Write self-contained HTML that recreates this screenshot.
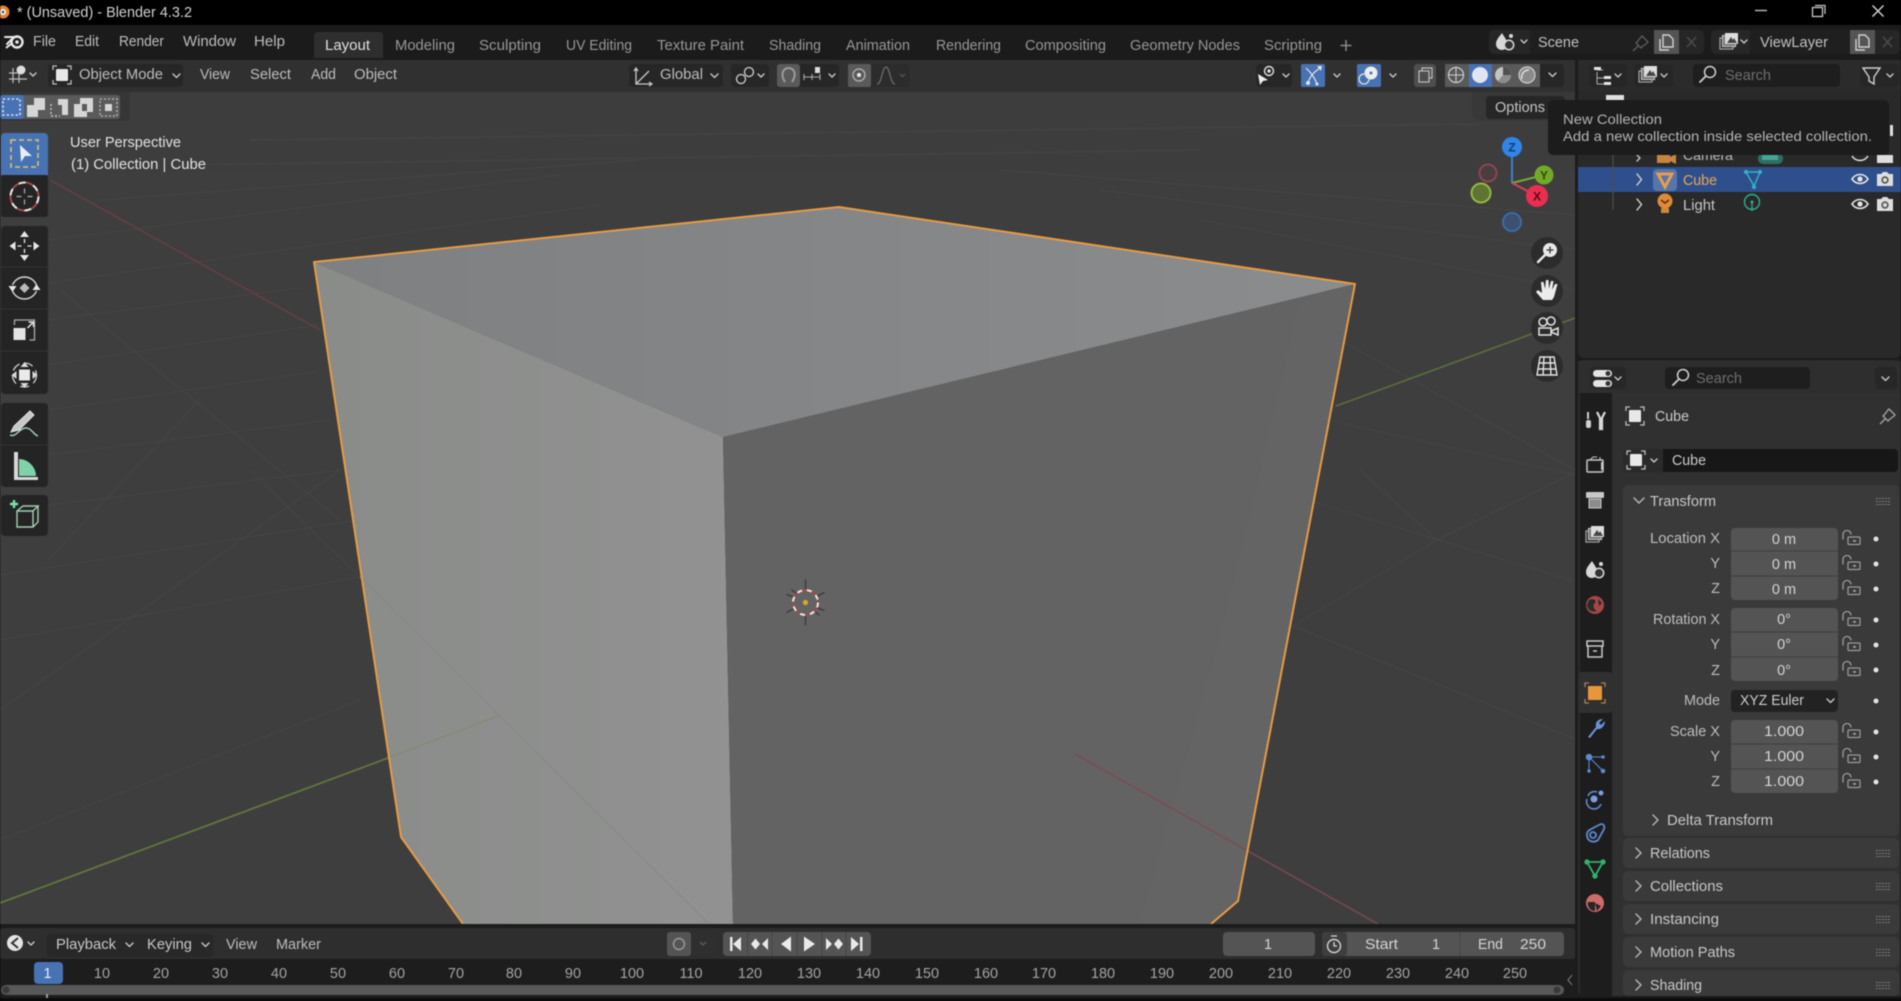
<!DOCTYPE html>
<html lang="en"><head><meta charset="utf-8"><title>Blender 4.3.2</title>
<style>
html,body{margin:0;padding:0;background:#000;width:1901px;height:1001px;overflow:hidden}
svg{display:block;filter:blur(.5px)}
text{font-family:"Liberation Sans",sans-serif;font-size:14.5px;fill:#bdbdbd}
.tab{fill:#979797;font-size:15px}
.mid{text-anchor:middle}
.end{text-anchor:end}
.sc{fill:#a4a4a4;font-size:14.5px}
.ch{fill:none;stroke:#c8c8c8;stroke-width:1.4;stroke-linecap:round;stroke-linejoin:round}
</style></head><body>
<svg width="1901" height="1001" viewBox="0 0 1901 1001" xmlns="http://www.w3.org/2000/svg">
<defs>
<linearGradient id="lf" x1="0" y1="0" x2="1" y2="0"><stop offset="0" stop-color="#8a8c8a"/><stop offset="1" stop-color="#919291"/></linearGradient>
<linearGradient id="tf" x1="0" y1="0" x2="1" y2="0"><stop offset="0" stop-color="#7f8081"/><stop offset="1" stop-color="#8b8c8d"/></linearGradient>
<g id="lock"><path d="M0 8V4a4 4 0 0 1 8-1" fill="none" stroke="#9c9c9c" stroke-width="1.300" stroke-linecap="round"/><rect x="5" y="6" width="12" height="7.500" rx="1" fill="none" stroke="#9c9c9c" stroke-width="1.200"/><rect x="10" y="9" width="3" height="1.800" fill="#9c9c9c"/></g>
<g id="grip" fill="none" stroke="#7f7f7f" stroke-width="1.100" stroke-dasharray="1.800 1.200"><path d="M0 .5H15M0 3.500H15M0 6.500H15"/></g>
<g id="eye"><path d="M-8 0C-4-6 4-6 8 0C4 6-4 6-8 0Z" fill="none" stroke="#e4e4e4" stroke-width="1.600"/><circle r="2.600" fill="#e4e4e4"/></g>
<g id="cam"><path d="M-8-5H-4L-2-7H2L4-5H8V7H-8Z" fill="#dedede"/><circle cy="1" r="3.700" fill="#555"/><circle cy="1" r="2" fill="#dedede"/></g>
<g id="objbox"><path d="M-9-5V-9H-5M5-9H9V-5M9 5V9H5M-5 9H-9V5" fill="none" stroke="#bdbdbd" stroke-width="1.300"/><rect x="-6" y="-6" width="12" height="12" rx="1" fill="#e8e8e8"/></g>
<g id="layers"><rect x="-9" y="-4" width="13" height="11" fill="none" stroke="#a8a8a8" stroke-width="1.200"/><rect x="-6.500" y="-6.500" width="13" height="11" fill="#777" stroke="#bbb" stroke-width="1.200"/><rect x="-4" y="-9" width="13" height="11" fill="#ddd"/><path d="M-2 1L2-5L4-2L5-4L8 1Z" fill="#444"/></g>
<g id="copy"><path d="M-6-3V8H3" fill="none" stroke="#d0d0d0" stroke-width="1.400"/><path d="M-3-7H3L7-3V5H-3Z" fill="none" stroke="#d0d0d0" stroke-width="1.400"/></g>
<g id="sceneic"><path d="M-4-9C-1-4 1-2 1 2C1 6-1 8-4 8C-8 8-10 5-10 2C-10-2-7-5-4-9Z" fill="#d8d8d8"/><circle cx="3" cy="3" r="4.700" fill="#333" stroke="#d8d8d8" stroke-width="1.500"/><circle cx="5" cy="-6" r="2" fill="#d8d8d8"/></g>
<g id="mag"><circle cx="3" cy="-3" r="5.500" fill="none" stroke="#cfcfcf" stroke-width="1.500"/><path d="M-1 1L-7 7" stroke="#cfcfcf" stroke-width="1.800" stroke-linecap="round"/></g>
<g id="pin"><path d="M-8 8L-3 3M-5 0L0 5L2 3L6 0L7-1L1-7L0-6L-3-2Z" fill="none" stroke="currentColor" stroke-width="1.300" stroke-linejoin="round"/></g>
</defs>

<!-- base -->
<rect width="1901" height="1001" fill="#1c1c1c"/>
<!-- title bar -->
<rect width="1901" height="25" fill="#000"/>
<circle cx="3" cy="12" r="6.500" fill="#e8822a"/><circle cx="3" cy="12" r="3" fill="#fff"/><circle cx="3" cy="12" r="1.500" fill="#3a6ea5"/>
<text x="17" y="17" textLength="175" lengthAdjust="spacingAndGlyphs" style="fill:#d0d0d0;font-size:15px">* (Unsaved) - Blender 4.3.2</text>
<path d="M1755 10.500H1767" stroke="#bdbdbd" stroke-width="1.400"/>
<rect x="1812.500" y="7.500" width="10" height="9" fill="none" stroke="#c8c8c8" stroke-width="1.300"/><path d="M1815 5.500H1825V14" fill="none" stroke="#c8c8c8" stroke-width="1.200"/>
<path d="M1872.500 5.500L1883.500 16.500M1883.500 5.500L1872.500 16.500" stroke="#d0d0d0" stroke-width="1.500"/>

<!-- top menu bar -->
<rect y="25" width="1901" height="35" fill="#1b1b1b"/>
<g transform="translate(14,41)"><circle cx="3" cy="1" r="5.500" fill="none" stroke="#e8e8e8" stroke-width="2.400"/><circle cx="3" cy="1" r="1.800" fill="#e8e8e8"/><path d="M-7 3L-1-3M-9-4H2" stroke="#e8e8e8" stroke-width="2" fill="none" stroke-linecap="round"/><path d="M-8 7L-3 3" stroke="#e8e8e8" stroke-width="2"/></g>
<text x="33" y="46" textLength="23" lengthAdjust="spacingAndGlyphs">File</text>
<text x="75" y="46" textLength="24" lengthAdjust="spacingAndGlyphs">Edit</text>
<text x="119" y="46" textLength="45" lengthAdjust="spacingAndGlyphs">Render</text>
<text x="183" y="46" textLength="53" lengthAdjust="spacingAndGlyphs">Window</text>
<text x="254" y="46" textLength="31" lengthAdjust="spacingAndGlyphs">Help</text>
<path d="M314 58V36a4 4 0 0 1 4-4H379a4 4 0 0 1 4 4V58Z" fill="#2e2e2e"/>
<text x="325" y="50" textLength="45" lengthAdjust="spacingAndGlyphs" style="fill:#e0e0e0;font-size:15px">Layout</text>
<text class="tab" x="395" y="50" textLength="60" lengthAdjust="spacingAndGlyphs">Modeling</text>
<text class="tab" x="479" y="50" textLength="62" lengthAdjust="spacingAndGlyphs">Sculpting</text>
<text class="tab" x="566" y="50" textLength="66" lengthAdjust="spacingAndGlyphs">UV Editing</text>
<text class="tab" x="657" y="50" textLength="87" lengthAdjust="spacingAndGlyphs">Texture Paint</text>
<text class="tab" x="769" y="50" textLength="52" lengthAdjust="spacingAndGlyphs">Shading</text>
<text class="tab" x="846" y="50" textLength="64" lengthAdjust="spacingAndGlyphs">Animation</text>
<text class="tab" x="936" y="50" textLength="65" lengthAdjust="spacingAndGlyphs">Rendering</text>
<text class="tab" x="1025" y="50" textLength="81" lengthAdjust="spacingAndGlyphs">Compositing</text>
<text class="tab" x="1130" y="50" textLength="110" lengthAdjust="spacingAndGlyphs">Geometry Nodes</text>
<text class="tab" x="1264" y="50" textLength="58" lengthAdjust="spacingAndGlyphs">Scripting</text>
<path d="M1346 40V51M1340.500 45.500H1351.500" stroke="#8a8a8a" stroke-width="1.500"/>

<!-- scene & viewlayer -->
<rect x="1489" y="30" width="215" height="24" rx="5" fill="#262626"/>
<rect x="1530" y="30" width="124" height="24" fill="#1f1f1f"/>
<use href="#sceneic" x="1506" y="42"/>
<path d="M1521 40l3 3 3-3" class="ch"/>
<text x="1538" y="47" textLength="41" lengthAdjust="spacingAndGlyphs" style="fill:#c2c2c2;font-size:15px">Scene</text>
<use href="#pin" x="1641" y="43" color="#5e5e5e"/>
<rect x="1654" y="30" width="25" height="24" fill="#545454"/><use href="#copy" x="1666" y="42"/>
<path d="M1687 37L1696 47M1696 37L1687 47" stroke="#4b4b4b" stroke-width="1.500"/>
<rect x="1711" y="30" width="189" height="24" rx="5" fill="#262626"/>
<rect x="1750" y="30" width="100" height="24" fill="#1f1f1f"/>
<use href="#layers" x="1729" y="42"/>
<path d="M1741 40l3 3 3-3" class="ch"/>
<text x="1760" y="47" textLength="68" lengthAdjust="spacingAndGlyphs" style="fill:#c2c2c2;font-size:15px">ViewLayer</text>
<rect x="1850" y="30" width="25" height="24" fill="#545454"/><use href="#copy" x="1862" y="42"/>
<path d="M1883 37L1892 47M1892 37L1883 47" stroke="#4b4b4b" stroke-width="1.500"/>

<!-- viewport -->
<rect x="0" y="60" width="1575" height="864" fill="#3e3e3e"/>
<rect x="0" y="92" width="1575" height="80" fill="#3d3d3d"/>
<g stroke="#464646" stroke-width="1" fill="none">
<path d="M48 240L560 175M48 283L600 205M48 320L300 288M48 365L318 325M48 410L315 372M48 455L330 420M48 505L340 470M0 575L360 520"/>
<path d="M250 140L1480 124M180 165L1200 150M100 200L640 160M1000 170L1575 215M1100 190L1575 250M1200 220L1575 290"/>
<path d="M60 290L340 520M48 560L200 400M0 640L360 577M250 470L360 577M0 710L340 470M0 840L360 700"/>
<path d="M1293 626L1580 741M1293 626L1437 540L1580 470M1336 422L1580 476M1314 502L1580 583M1340 340L1575 470M1437 540L1360 470"/>
</g>
<path d="M50 180L320 330" stroke="#6b3d42" stroke-width="1.500"/>
<path d="M0 903L388 758" stroke="#62763c" stroke-width="1.800"/>
<path d="M1336 406L1575 318" stroke="#5a6d3c" stroke-width="1.700"/>

<!-- cube -->
<path d="M314 262L723 437L733 924H464L401 837Z" fill="url(#lf)"/>
<path d="M723 437L1355 284L1238 901L1211 924H733Z" fill="#636363"/>
<path d="M314 262L839 207L1355 284L723 437Z" fill="url(#tf)"/>
<path d="M1300 300L1355 284L1238 901L1211 924H1140L1230 600Z" fill="#666" opacity=".4"/>
<path d="M388 758L498 716" stroke="#7f8c70" stroke-width="1.300"/>
<path d="M360 577L708 923" stroke="#858786" stroke-width="1"/>
<path d="M1075 754L1378 924" stroke="#7d4a50" stroke-width="1.400"/>
<path d="M463 924L401 837L314 262L839 207L1355 284L1238 901L1211 924" fill="none" stroke="#e69b44" stroke-width="2" stroke-linejoin="round"/>
<!-- origin -->
<g transform="translate(805.500,602.500)">
<path d="M0-23V-12M0 12V23M-19-8L-11-5M11 5L19 8M-19 10L-11 6M11-6L19-10M-14-13L-8-8M8 8L14 13" stroke="#3a3a3a" stroke-width="1.300"/>
<circle r="12.500" fill="none" stroke="#a84848" stroke-width="2"/>
<circle r="12.500" fill="none" stroke="#e8e8e8" stroke-width="2" stroke-dasharray="5 5"/>
<circle r="2.600" fill="#e0a030"/>
</g>

<!-- header -->
<rect x="0" y="60" width="1575" height="32" fill="#303030"/>
<g transform="translate(19,74)"><path d="M-10 5H8M-10-1H2M-6-6V9M0-3V9" stroke="#bfbfbf" stroke-width="1.200" fill="none"/><circle cx="2" cy="-4" r="4.500" fill="#dcdcdc"/></g>
<path d="M30 73l3 3 3-3" class="ch"/>
<rect x="48" y="64" width="135" height="23" rx="4" fill="#262626"/>
<use href="#objbox" x="62" y="75"/>
<text x="79" y="79" textLength="84" lengthAdjust="spacingAndGlyphs">Object Mode</text>
<path d="M173 74l3.500 3.500 3.500-3.500" class="ch"/>
<text x="200" y="79" textLength="30" lengthAdjust="spacingAndGlyphs">View</text>
<text x="250" y="79" textLength="41" lengthAdjust="spacingAndGlyphs">Select</text>
<text x="311" y="79" textLength="25" lengthAdjust="spacingAndGlyphs">Add</text>
<text x="354" y="79" textLength="43" lengthAdjust="spacingAndGlyphs">Object</text>

<rect x="629" y="64" width="94" height="23" rx="4" fill="#262626"/>
<path d="M636 68V84H652M636 84L649 71M634 71L636 68L638 71M649 82L652 84L649 86" fill="none" stroke="#c8c8c8" stroke-width="1.300"/>
<text x="660" y="79" textLength="43" lengthAdjust="spacingAndGlyphs">Global</text>
<path d="M711 74l3.500 3.500 3.500-3.500" class="ch"/>
<rect x="731" y="64" width="38" height="23" rx="4" fill="#262626"/>
<circle cx="741" cy="79" r="4.500" fill="none" stroke="#d0d0d0" stroke-width="1.300"/><circle cx="749" cy="72" r="4.500" fill="none" stroke="#d0d0d0" stroke-width="1.300"/>
<path d="M758 74l3 3 3-3" class="ch"/>
<rect x="777" y="64" width="62" height="23" rx="4" fill="#262626"/>
<rect x="777" y="64" width="23" height="23" rx="3" fill="#5a5a5a"/>
<path d="M785 82C780 74 783 68 789 68C796 69 796 76 792 82" fill="none" stroke="#9c9c9c" stroke-width="2"/>
<path d="M804 77H820M804 74V80M812 74V80M820 74V80" stroke="#aaa" stroke-width="1.100" fill="none"/><rect x="815" y="67" width="5" height="6" fill="#ddd"/>
<path d="M829 74l3 3 3-3" class="ch"/>
<rect x="848" y="64" width="62" height="23" rx="4" fill="#2c2c2c"/>
<rect x="848" y="64" width="23" height="23" rx="2" fill="#5a5a5a"/>
<circle cx="859" cy="75" r="6" fill="none" stroke="#aaa" stroke-width="1.400"/><circle cx="859" cy="75" r="2" fill="#eee"/>
<path d="M877 84C882 84 882 67 886 67C890 67 890 84 895 84" fill="none" stroke="#6a6a6a" stroke-width="1.300"/>
<path d="M900 74l2.500 2.500 2.500-2.500" fill="none" stroke="#5a5a5a" stroke-width="1.200"/>

<rect x="1256" y="64" width="36" height="23" rx="4" fill="#262626"/>
<circle cx="1269" cy="71" r="4.500" fill="none" stroke="#e0e0e0" stroke-width="1.400"/><circle cx="1269" cy="71" r="1.700" fill="#e0e0e0"/>
<path d="M1258 74L1268 80L1263 81L1260 85Z" fill="#eee"/>
<path d="M1283 74l3 3 3-3" class="ch"/>
<rect x="1301" y="64" width="24" height="23" rx="2" fill="#4772b3"/>
<path d="M1306 68C1310 72 1314 76 1317 84M1320 68C1314 72 1310 76 1308 83" fill="none" stroke="#e4e4e4" stroke-width="1.200"/><circle cx="1308" cy="83" r="2" fill="#e4e4e4"/><circle cx="1317" cy="84" r="1.500" fill="#e4e4e4"/><path d="M1317 66L1322 66L1321 71Z" fill="#e4e4e4"/>
<path d="M1334 74l3 3 3-3" class="ch"/>
<rect x="1357" y="64" width="24" height="23" rx="2" fill="#4772b3"/>
<circle cx="1371" cy="73" r="6.500" fill="#eee"/><circle cx="1364" cy="79" r="5" fill="none" stroke="#e0e0e0" stroke-width="1.300"/><circle cx="1371" cy="73" r="1.500" fill="#4772b3"/>
<path d="M1390 74l3 3 3-3" class="ch"/>
<!-- xray + shading -->
<rect x="1414" y="64" width="22" height="23" rx="3" fill="#4e4e4e"/>
<rect x="1419" y="71" width="10" height="11" fill="none" stroke="#bdbdbd" stroke-width="1.200"/><path d="M1422 71V68H1432V78H1429" fill="none" stroke="#bdbdbd" stroke-width="1.200"/>
<rect x="1445" y="64" width="119" height="23" rx="4" fill="#262626"/>
<rect x="1445" y="64" width="24" height="23" fill="#5a5a5a"/>
<rect x="1469" y="64" width="23" height="23" fill="#4772b3"/>
<rect x="1492" y="64" width="48" height="23" fill="#5a5a5a"/>
<circle cx="1456" cy="75" r="7.500" fill="none" stroke="#cfcfcf" stroke-width="1.200"/><path d="M1448.500 75H1463.500M1456 67.500V82.500" stroke="#cfcfcf" stroke-width="1"/>
<circle cx="1480" cy="75" r="8" fill="#dfe5f2"/>
<circle cx="1503" cy="75" r="8" fill="#c4c4c4"/><path d="M1503 75V67A8 8 0 0 1 1511 75Z" fill="#505050"/><path d="M1503 75L1511 75A8 8 0 0 1 1498 81Z" fill="#8c8c8c"/>
<circle cx="1527" cy="75" r="8" fill="#8a8a8a" stroke="#d0d0d0" stroke-width="1.200"/><path d="M1522 79A7 7 0 0 1 1529 70" stroke="#e0e0e0" stroke-width="1.400" fill="none"/>
<path d="M1549 73l3.500 3.500 3.500-3.500" class="ch"/>

<!-- select mode row -->
<path d="M0 92H130V117a4 4 0 0 1-4 4H0Z" fill="#363636"/>
<rect x="0" y="95" width="120" height="24" rx="3" fill="#5a5a5a"/>
<rect x="0" y="95" width="24" height="24" rx="3" fill="#4772b3"/>
<rect x="3" y="99" width="17" height="16" fill="none" stroke="#e0e8f4" stroke-width="1.600" stroke-dasharray="2.200 2.200"/>
<path d="M34 98H45V110H38V117H27V105H34Z" fill="#d6d6d6"/>
<path d="M58 99H68V115H62V105H58Z" fill="#d6d6d6"/><path d="M51 104V116H60" fill="none" stroke="#c8c8c8" stroke-width="1.400" stroke-dasharray="2 2"/>
<path d="M80 98H93V112H87V117H74V104H80ZM82 104V111H87V104Z" fill="#d6d6d6" fill-rule="evenodd"/>
<rect x="105" y="104" width="7" height="7" fill="#d6d6d6"/><rect x="100" y="99" width="17" height="17" fill="none" stroke="#bdbdbd" stroke-width="1.300" stroke-dasharray="2 2"/>

<!-- viewport text -->
<text x="70" y="147" textLength="111" lengthAdjust="spacingAndGlyphs" style="fill:#e2e2e2;font-size:14.500px">User Perspective</text>
<text x="71" y="169" textLength="135" lengthAdjust="spacingAndGlyphs" style="fill:#e2e2e2;font-size:14.500px">(1) Collection | Cube</text>

<!-- toolbar -->
<rect x="1" y="175" width="47" height="42" rx="3" fill="#242424"/>
<path d="M1 175V137a4 4 0 0 1 4-4H44a4 4 0 0 1 4 4V175Z" fill="#4772b3"/>
<rect x="1" y="226" width="47" height="168" rx="4" fill="#242424"/>
<rect x="1" y="403" width="47" height="84" rx="4" fill="#242424"/>
<rect x="1" y="495" width="47" height="41" rx="4" fill="#242424"/>
<path d="M1 267H48M1 309H48M1 351H48M1 445H48" stroke="#343434"/>
<rect x="11" y="140" width="27" height="27" fill="none" stroke="#c8ba7c" stroke-width="1.800" stroke-dasharray="5 3"/>
<path d="M20 145L32 156L25 156L21 162Z" fill="#e8eef8"/>
<g transform="translate(24.500,196.500)"><circle r="14" fill="none" stroke="#a04a50" stroke-width="2"/><circle r="14" fill="none" stroke="#e8e8e8" stroke-width="2" stroke-dasharray="7 8"/><path d="M-8 0H-3M3 0H8M0-8V-3M0 3V8" stroke="#aaa" stroke-width="1.200"/></g>
<g transform="translate(24.500,246)" fill="#e6e6e6"><path d="M0-15L-4.500-9H4.500ZM0 15L-4.500 9H4.500ZM-15 0L-9-4.500V4.500ZM15 0L9-4.500V4.500Z"/><path d="M-7 0H-3M3 0H7M0-7V-3M0 3V7" stroke="#e6e6e6" stroke-width="1.300"/></g>
<g transform="translate(24.500,288)"><path d="M-12-3A13 13 0 0 1 12-3M-12 3A13 13 0 0 0 12 3" fill="none" stroke="#d8d8d8" stroke-width="1.400"/><path d="M0-5L5 0L0 5L-5 0Z" fill="#bbb"/><path d="M-12 4L-16-2H-8ZM12-4L16 2H8Z" fill="#e6e6e6"/></g>
<g transform="translate(24.500,331)"><rect x="-11" y="-3" width="12" height="12" fill="#e4e4e4"/><path d="M-10-6V-11H10V9H5" fill="none" stroke="#aaa" stroke-width="1.300"/><path d="M3-3L8-8M4-9H9V-4" fill="none" stroke="#e0e0e0" stroke-width="1.500"/></g>
<g transform="translate(24.500,375)"><rect x="-5.500" y="-5.500" width="11" height="11" fill="#eaeaea"/><circle r="12" fill="none" stroke="#d0d0d0" stroke-width="1.300" stroke-dasharray="9 5"/><path d="M0-13L-4-8H4ZM0 13L-4 8H4ZM-13 0L-8-4V4ZM13 0L8-4V4Z" fill="#d8d8d8"/></g>
<g transform="translate(24,424)"><path d="M-13 8L-10 2L6-13L10-9L-5 6Z" fill="#c8c8c8" stroke="#e0e0e0" stroke-width="1"/><path d="M-14 11C-8 14-4 3 3 4C8 5 10 11 14 12" fill="none" stroke="#a8d4bb" stroke-width="1.400"/></g>
<g transform="translate(24,467)"><path d="M-10-15H-6V10H14V13H-10Z" fill="#d8d8d8"/><path d="M-5-8C4-8 12 0 12 9H-5Z" fill="#7fd3a9"/></g>
<g transform="translate(25,517)"><path d="M-8-6H8V10H-8ZM-8-6L-2-11H13L8-6M13-11V5L8 10" fill="none" stroke="#a2cfb4" stroke-width="1.400"/><path d="M-11-17V-9M-15-13H-7" stroke="#7fe0ab" stroke-width="2.400"/></g>

<!-- options -->
<path d="M1472 92H1575V121H1480a8 8 0 0 1-8-8Z" fill="#383838"/>
<rect x="1486" y="96" width="79" height="23" rx="4" fill="#262626"/>
<text x="1495" y="112" textLength="50" lengthAdjust="spacingAndGlyphs" style="fill:#c4c4c4">Options</text>

<!-- gizmo -->
<path d="M1512 183V148" stroke="#3d7fcf" stroke-width="2"/>
<path d="M1512 183L1544 175" stroke="#7da838" stroke-width="2"/>
<path d="M1512 183L1537 196" stroke="#d84050" stroke-width="2"/>
<circle cx="1488" cy="173" r="8.500" fill="#4a3c3f" stroke="#8f4551" stroke-width="2"/>
<circle cx="1481" cy="193" r="9.500" fill="#5e7433" stroke="#93bb3c" stroke-width="2"/>
<circle cx="1512" cy="222" r="9" fill="#3c5070" stroke="#3e6aa3" stroke-width="2"/>
<circle cx="1512" cy="147" r="10" fill="#2f86e8"/>
<circle cx="1544" cy="175" r="9.500" fill="#73a92a"/>
<circle cx="1537" cy="196" r="11" fill="#ea2e50"/>
<text class="mid" x="1512" y="151.500" style="fill:#123c70;font-weight:bold;font-size:12px">Z</text>
<text class="mid" x="1544" y="179.500" style="fill:#2e4a08;font-weight:bold;font-size:12px">Y</text>
<text class="mid" x="1537" y="200.500" style="fill:#5a0818;font-weight:bold;font-size:12px">X</text>
<!-- nav -->
<circle cx="1547" cy="253" r="16" fill="#2c2c2c"/><circle cx="1547" cy="291" r="16" fill="#2c2c2c"/><circle cx="1547" cy="328" r="16" fill="#2c2c2c"/><circle cx="1547" cy="366" r="16" fill="#2c2c2c"/>
<g transform="translate(1547,253)"><circle cx="3" cy="-3" r="7" fill="#e8e8e8"/><path d="M-2 2L-9 9" stroke="#e8e8e8" stroke-width="2.500" stroke-linecap="round"/><path d="M3-6.500V.5M-.5-3H6.500" stroke="#333" stroke-width="1.300"/></g>
<g transform="translate(1547,291)"><path d="M-4 9L-11 1L-9-1L-5 2L-6-9L-3.500-9L-2-2L-1-11H1.500L2-2L4-10H6.500L5-1L8-7H10.500L7 6L5 9Z" fill="#ececec"/></g>
<g transform="translate(1547,328)" fill="none" stroke="#e4e4e4" stroke-width="1.500"><circle cx="-4" cy="-6" r="4"/><circle cx="4" cy="-7" r="4"/><rect x="-8" y="0" width="12" height="7"/><path d="M4 3L11 0V7L4 4" /></g>
<g transform="translate(1547,366)" fill="none" stroke="#e4e4e4" stroke-width="1.400"><path d="M-7-9H7L10 9H-10ZM-8.500-3H8.500M-9.500 3H9.500M-3-9L-4 9M3-9L4 9"/></g>

<!-- right panel divider -->
<rect x="1575" y="60" width="326" height="941" fill="#1c1c1c"/>
<!-- outliner -->
<rect x="1578" y="60" width="323" height="298" rx="6" fill="#292929"/>
<rect x="1578" y="60" width="323" height="30" fill="#2b2b2b"/>
<rect x="1589" y="64" width="38" height="23" rx="4" fill="#262626"/>
<path d="M1597 70H1603M1597 72V84M1597 78H1607M1597 84H1607" fill="none" stroke="#b0b0b0"/><rect x="1594" y="67" width="7" height="3" fill="#e4e4e4"/><rect x="1604" y="76" width="7" height="3" fill="#e4e4e4"/><rect x="1604" y="82" width="7" height="3" fill="#e4e4e4"/>
<path d="M1615 74l3 3 3-3" class="ch"/>
<rect x="1634" y="64" width="39" height="23" rx="4" fill="#262626"/>
<use href="#layers" x="1648" y="75"/>
<path d="M1661 74l3 3 3-3" class="ch"/>
<rect x="1693" y="64" width="147" height="23" rx="4" fill="#1e1e1e"/>
<use href="#mag" x="1707" y="75"/>
<text x="1725" y="80" textLength="46" lengthAdjust="spacingAndGlyphs" style="fill:#6e6e6e;font-size:15px">Search</text>
<rect x="1860" y="64" width="39" height="23" rx="4" fill="#262626"/>
<path d="M1863 68H1880L1874 77V84L1869 81V77Z" fill="none" stroke="#cfcfcf" stroke-width="1.400"/>
<path d="M1887 74l3 3 3-3" class="ch"/>
<rect x="1606" y="95" width="18" height="5" fill="#e0e0e0"/>
<rect x="1890" y="125" width="3" height="11" fill="#e0e0e0"/>

<rect x="1578" y="167" width="323" height="25" fill="#2f4f8c"/>
<path d="M1613 155V210" stroke="#4d4d4d" stroke-width="1.200"/>
<path d="M1637 155l3 3-3 3" class="ch"/><path d="M1637 174l4.500 5.500-4.500 5.500" class="ch"/><path d="M1637 199l4.500 5.500-4.500 5.500" class="ch"/>
<rect x="1657" y="154" width="13" height="9" fill="#c9853f"/><path d="M1670 157L1676 154V164L1670 161Z" fill="#c9853f"/>
<text x="1683" y="160" textLength="50" lengthAdjust="spacingAndGlyphs" style="font-size:14px">Camera</text>
<rect x="1758" y="153" width="25" height="11" rx="5" fill="#2c6f64"/><rect x="1762" y="155" width="16" height="5" fill="#47a595"/>
<path d="M1852 156C1856 162 1864 162 1868 156" fill="none" stroke="#e4e4e4" stroke-width="1.500"/>
<rect x="1877" y="155" width="16" height="8" fill="#dedede"/>
<rect x="1653" y="169" width="24" height="22" rx="4" fill="#5676ab"/>
<path d="M1658 174H1672L1665 187Z" fill="none" stroke="#e89c4c" stroke-width="3"/>
<text x="1683" y="185" textLength="34" lengthAdjust="spacingAndGlyphs" style="fill:#e8a654;font-size:15px">Cube</text>
<path d="M1746 172H1760L1754 186Z" fill="none" stroke="#2fb6c8" stroke-width="1.400"/><circle cx="1746" cy="172" r="2" fill="#2fb6c8"/><circle cx="1760" cy="172" r="2" fill="#2fb6c8"/><circle cx="1754" cy="187" r="2" fill="#2fb6c8"/>
<use href="#eye" x="1860" y="179"/><use href="#cam" x="1885" y="179"/>
<circle cx="1665" cy="201" r="7.500" fill="#e08a38"/><rect x="1661" y="208" width="8" height="5" fill="#c9893e"/><path d="M1661 200L1665 203L1669 200" stroke="#5a3010" stroke-width="1.500" fill="none"/>
<text x="1683" y="210" textLength="32" lengthAdjust="spacingAndGlyphs" style="fill:#c8c8c8;font-size:15px">Light</text>
<circle cx="1752" cy="202" r="7.500" fill="none" stroke="#2eb08f" stroke-width="1.400"/><circle cx="1752" cy="202" r="1.500" fill="#2eb08f"/><path d="M1752 203V211" stroke="#2eb08f" stroke-width="1.300"/>
<use href="#eye" x="1860" y="204"/><use href="#cam" x="1885" y="204"/>

<!-- tooltip -->
<rect x="1548" y="100" width="341" height="55" rx="5" fill="#1c1c1c"/>
<text x="1563" y="124" textLength="99" lengthAdjust="spacingAndGlyphs" style="fill:#b4b4b4;font-size:14px">New Collection</text>
<text x="1563" y="141" textLength="309" lengthAdjust="spacingAndGlyphs" style="fill:#b4b4b4;font-size:14px">Add a new collection inside selected collection.</text>

<!-- properties -->
<rect x="1578" y="360" width="323" height="636" rx="5" fill="#2c2c2c"/>
<rect x="1578" y="361" width="323" height="32" fill="#2e2e2e"/>
<rect x="1580" y="393" width="32" height="603" fill="#1d1d1d"/>
<rect x="1612" y="393" width="289" height="603" fill="#303030"/>
<rect x="1578" y="672" width="34" height="41" rx="3" fill="#303030"/>
<!-- header -->
<rect x="1590" y="367" width="36" height="22" rx="4" fill="#272727"/>
<rect x="1593" y="370" width="19" height="7" rx="3.500" fill="#e4e4e4"/><circle cx="1608" cy="373.500" r="2.500" fill="#333"/><rect x="1593" y="380" width="19" height="7" rx="3.500" fill="#e4e4e4"/><circle cx="1608" cy="383.500" r="2.500" fill="#333"/>
<path d="M1615 377l3 3 3-3" class="ch"/>
<rect x="1665" y="367" width="145" height="22" rx="4" fill="#1e1e1e"/>
<use href="#mag" x="1680" y="378"/>
<text x="1696" y="383" textLength="46" lengthAdjust="spacingAndGlyphs" style="fill:#6e6e6e;font-size:15px">Search</text>
<rect x="1875" y="367" width="22" height="22" rx="4" fill="#272727"/>
<path d="M1882 377l3.500 3.500 3.500-3.500" class="ch"/>
<!-- context -->
<use href="#objbox" x="1635" y="416"/>
<text x="1655" y="421" textLength="34" lengthAdjust="spacingAndGlyphs" style="fill:#cbcbcb;font-size:15px">Cube</text>
<use href="#pin" x="1888" y="416" color="#a5a5a5"/>
<rect x="1623" y="449" width="275" height="23" rx="4" fill="#2a2a2a"/>
<path d="M1663 449H1894a4 4 0 0 1 4 4V468a4 4 0 0 1-4 4H1663Z" fill="#171717"/>
<use href="#objbox" x="1636" y="460"/>
<path d="M1651 459l3 3 3-3" class="ch"/>
<text x="1672" y="465" textLength="34" lengthAdjust="spacingAndGlyphs" style="fill:#cbcbcb;font-size:15px">Cube</text>
<!-- transform panel -->
<rect x="1623" y="485" width="276" height="351" rx="5" fill="#3a3a3a"/>
<path d="M1634 498l5 5 5-5" class="ch" style="stroke:#b8b8b8"/>
<text x="1650" y="506" textLength="66" lengthAdjust="spacingAndGlyphs" style="fill:#c8c8c8;font-size:15px">Transform</text>
<use href="#grip" x="1876" y="498"/>
<!-- fields -->
<rect x="1731" y="528" width="107" height="72" rx="4" fill="#545454"/>
<rect x="1731" y="608" width="107" height="73" rx="4" fill="#545454"/>
<rect x="1731" y="720" width="107" height="73" rx="4" fill="#545454"/>
<path d="M1731 551H1838M1731 576H1838M1731 632H1838M1731 657H1838M1731 744H1838M1731 769H1838" stroke="#3f3f3f" stroke-width="1"/>
<rect x="1731" y="690" width="107" height="22" rx="4" fill="#222"/>
<text class="end" x="1720" y="543" textLength="70" lengthAdjust="spacingAndGlyphs">Location X</text>
<text class="end" x="1720" y="568">Y</text>
<text class="end" x="1720" y="593">Z</text>
<text class="end" x="1720" y="624" textLength="67" lengthAdjust="spacingAndGlyphs">Rotation X</text>
<text class="end" x="1720" y="649">Y</text>
<text class="end" x="1720" y="675">Z</text>
<text class="end" x="1720" y="705" textLength="36" lengthAdjust="spacingAndGlyphs">Mode</text>
<text class="end" x="1720" y="736" textLength="50" lengthAdjust="spacingAndGlyphs">Scale X</text>
<text class="end" x="1720" y="761">Y</text>
<text class="end" x="1720" y="786">Z</text>
<text class="mid" x="1784" y="544" style="fill:#d4d4d4">0 m</text><text class="mid" x="1784" y="569" style="fill:#d4d4d4">0 m</text><text class="mid" x="1784" y="594" style="fill:#d4d4d4">0 m</text>
<text class="mid" x="1784" y="624" style="fill:#d4d4d4">0°</text><text class="mid" x="1784" y="649" style="fill:#d4d4d4">0°</text><text class="mid" x="1784" y="675" style="fill:#d4d4d4">0°</text>
<text class="mid" x="1784" y="736" textLength="40" lengthAdjust="spacingAndGlyphs" style="fill:#d4d4d4">1.000</text><text class="mid" x="1784" y="761" textLength="40" lengthAdjust="spacingAndGlyphs" style="fill:#d4d4d4">1.000</text><text class="mid" x="1784" y="786" textLength="40" lengthAdjust="spacingAndGlyphs" style="fill:#d4d4d4">1.000</text>
<text x="1740" y="705" textLength="64" lengthAdjust="spacingAndGlyphs" style="fill:#cccccc">XYZ Euler</text>
<path d="M1827 699l3.500 3.500 3.500-3.500" class="ch"/>
<use href="#lock" x="1843" y="531"/><use href="#lock" x="1843" y="556"/><use href="#lock" x="1843" y="581"/>
<use href="#lock" x="1843" y="612"/><use href="#lock" x="1843" y="637"/><use href="#lock" x="1843" y="662"/>
<use href="#lock" x="1843" y="724"/><use href="#lock" x="1843" y="749"/><use href="#lock" x="1843" y="774"/>
<g fill="#e4e4e4"><circle cx="1876" cy="539" r="2.500"/><circle cx="1876" cy="564" r="2.500"/><circle cx="1876" cy="589" r="2.500"/><circle cx="1876" cy="620" r="2.500"/><circle cx="1876" cy="645" r="2.500"/><circle cx="1876" cy="670" r="2.500"/><circle cx="1876" cy="701" r="2.500"/><circle cx="1876" cy="732" r="2.500"/><circle cx="1876" cy="757" r="2.500"/><circle cx="1876" cy="782" r="2.500"/></g>
<path d="M1653 815l5 5-5 5" class="ch" style="stroke:#b8b8b8"/>
<text x="1667" y="825" textLength="106" lengthAdjust="spacingAndGlyphs" style="fill:#c8c8c8;font-size:15px">Delta Transform</text>
<!-- collapsed panels -->
<rect x="1623" y="838" width="276" height="30" rx="5" fill="#3a3a3a"/>
<rect x="1623" y="871" width="276" height="30" rx="5" fill="#3a3a3a"/>
<rect x="1623" y="904" width="276" height="30" rx="5" fill="#3a3a3a"/>
<rect x="1623" y="937" width="276" height="30" rx="5" fill="#3a3a3a"/>
<rect x="1623" y="970" width="276" height="26" rx="5" fill="#3a3a3a"/>
<g class="ch" style="stroke:#b8b8b8"><path d="M1636 848l5 5-5 5"/><path d="M1636 881l5 5-5 5"/><path d="M1636 914l5 5-5 5"/><path d="M1636 947l5 5-5 5"/><path d="M1636 980l5 5-5 5"/></g>
<text x="1650" y="858" textLength="60" lengthAdjust="spacingAndGlyphs" style="font-size:15px;fill:#c8c8c8">Relations</text>
<text x="1650" y="891" textLength="73" lengthAdjust="spacingAndGlyphs" style="font-size:15px;fill:#c8c8c8">Collections</text>
<text x="1650" y="924" textLength="69" lengthAdjust="spacingAndGlyphs" style="font-size:15px;fill:#c8c8c8">Instancing</text>
<text x="1650" y="957" textLength="85" lengthAdjust="spacingAndGlyphs" style="font-size:15px;fill:#c8c8c8">Motion Paths</text>
<text x="1650" y="990" textLength="52" lengthAdjust="spacingAndGlyphs" style="font-size:15px;fill:#c8c8c8">Shading</text>
<use href="#grip" x="1876" y="850"/><use href="#grip" x="1876" y="883"/><use href="#grip" x="1876" y="916"/><use href="#grip" x="1876" y="949"/><use href="#grip" x="1876" y="982"/>
<!-- property tabs -->
<g transform="translate(1595,421)"><path d="M-7-9V-2" stroke="#d0d0d0" stroke-width="2"/><rect x="-9" y="-1" width="5" height="8" rx="2" fill="#d0d0d0"/><path d="M2-9L5-3V8H7V-3L10-9" fill="none" stroke="#d8d8d8" stroke-width="2.200"/></g>
<g transform="translate(1595,465)"><rect x="-8" y="-5" width="16" height="12" rx="1" fill="none" stroke="#c8c8c8" stroke-width="1.500"/><path d="M-5-5L-2-8H2M5-8V-5" stroke="#c8c8c8" fill="none"/><rect x="6" y="-3" width="2" height="8" fill="#c8c8c8"/></g>
<g transform="translate(1595,500)"><rect x="-9" y="-8" width="18" height="6" rx="1" fill="#c8c8c8"/><path d="M-6-1H6V8H-6Z" fill="#8c8c8c" stroke="#c8c8c8"/></g>
<use href="#layers" x="1595" y="535"/>
<use href="#sceneic" x="1596" y="570"/>
<g transform="translate(1595,605)"><circle r="9" fill="#a84646"/><path d="M-6-5C-2-7 2-5 0-2C-3 0-1 5 2 6C-3 8-8 4-8 0ZM3-6L7-2L4 1Z" fill="#2a2a2a"/></g>
<g transform="translate(1595,649)" fill="none" stroke="#c8c8c8" stroke-width="1.500"><rect x="-8" y="-8" width="16" height="5"/><path d="M-7-3V8H7V-3M-2 2H2"/></g>
<g transform="translate(1595,693)"><path d="M-10-6V-10H-6M6-10H10V-6M10 6V10H6M-6 10H-10V6" fill="none" stroke="#a88050" stroke-width="1.300"/><rect x="-7" y="-7" width="14" height="14" rx="1" fill="#e8963c"/></g>
<g transform="translate(1595,728)"><path d="M-7 9L1-1C0-6 3-9 8-9L4-5L6-3L10-7C10-2 6 2 2 1L-5 10Z" fill="#6b92d6"/></g>
<g transform="translate(1595,763)" fill="#5d8ad0" stroke="#5d8ad0"><path d="M-6-6H8M-6-6V8M-6-6L8 8" fill="none" stroke-width="1.100"/><circle cx="-6" cy="-6" r="2.800"/><circle cx="8" cy="-6" r="1.300"/><circle cx="-6" cy="8" r="1.300"/><circle cx="8" cy="8" r="1.800"/></g>
<g transform="translate(1595,798)"><circle cx="-1" cy="1" r="3.500" fill="#7a9fe0"/><path d="M-8 1A7 7 0 0 0 6 6" fill="none" stroke="#5d8ad0" stroke-width="1.600"/><path d="M-7-2A7 7 0 0 1 2-6" fill="none" stroke="#5d8ad0" stroke-width="1.600"/><circle cx="6" cy="-5" r="2.500" fill="#7a9fe0"/></g>
<g transform="translate(1595,833)" fill="none" stroke="#5d8ad0" stroke-width="1.800"><path d="M-8 3C-9-3-3-4 0-6L6-9C10-9 10-5 8-2L3 7C-1 10-7 9-8 3Z"/><circle cx="-2" cy="2" r="3"/></g>
<g transform="translate(1595,868)" fill="none" stroke="#2fb36b" stroke-width="1.800"><path d="M-8-6H8L0 8Z"/><circle cx="-8" cy="-6" r="1.800" fill="#2fb36b"/><circle cx="8" cy="-6" r="1.800" fill="#2fb36b"/><circle cx="0" cy="8" r="1.800" fill="#2fb36b"/></g>
<g transform="translate(1595,903)"><circle r="9" fill="#d16a6a"/><path d="M-7-1H0V8C-5 8-8 3-7-1Z" fill="#262626"/><path d="M0 0L6 3L2 8Z" fill="#262626"/></g>

<!-- timeline -->
<rect x="0" y="924" width="1575" height="77" fill="#1c1c1c"/>
<rect x="0" y="928" width="1575" height="31" rx="3" fill="#2e2e2e"/>
<rect x="0" y="959" width="1575" height="39" fill="#1d1d1d"/>
<g transform="translate(15,943)"><circle r="8" fill="#e4e4e4"/><path d="M3-5L-3 0L3 5" fill="none" stroke="#333" stroke-width="2"/></g>
<path d="M28 942l3 3 3-3" class="ch"/>
<rect x="47" y="934" width="166" height="23" rx="4" fill="#282828"/>
<text x="56" y="949" textLength="60" lengthAdjust="spacingAndGlyphs" style="fill:#c8c8c8">Playback</text>
<path d="M126 943l3.500 3.500 3.500-3.500" class="ch"/>
<text x="147" y="949" textLength="45" lengthAdjust="spacingAndGlyphs" style="fill:#c8c8c8">Keying</text>
<path d="M202 943l3.500 3.500 3.500-3.500" class="ch"/>
<text x="226" y="949" textLength="31" lengthAdjust="spacingAndGlyphs">View</text>
<text x="276" y="949" textLength="45" lengthAdjust="spacingAndGlyphs">Marker</text>
<rect x="667" y="932" width="24" height="24" rx="3" fill="#545454"/><rect x="691" y="932" width="24" height="24" rx="3" fill="#2f2f2f"/>
<circle cx="679" cy="944" r="5.500" fill="none" stroke="#9a9a9a" stroke-width="1.400"/>
<path d="M700 942l3 3 3-3" fill="none" stroke="#5f5f5f" stroke-width="1.300"/>
<rect x="723" y="932" width="148" height="24" rx="4" fill="#545454"/>
<path d="M747.500 932V956M772 932V956M797 932V956M822 932V956M846 932V956" stroke="#444"/>
<g fill="#eaeaea">
<path d="M730 937H732.500V951H730ZM741 937V951L733 944Z"/>
<path d="M751 944L755.500 938.500L760 944L755.500 949.500ZM762 944L768 938V950Z"/>
<path d="M791 936.500V951.500L781 944Z"/>
<path d="M804 936.500V951.500L815 944Z"/>
<path d="M826 938L832 944L826 950ZM834 944L838.500 938.500L843 944L838.500 949.500Z"/>
<path d="M851 937L859 944L851 951ZM860 937H862.500V951H860Z"/>
</g>
<rect x="1223" y="932" width="92" height="24" rx="4" fill="#545454"/>
<text class="mid" x="1268" y="949" style="fill:#d4d4d4">1</text>
<rect x="1322" y="932" width="242" height="24" rx="4" fill="#545454"/>
<rect x="1322" y="932" width="25" height="24" rx="4" fill="#3e3e3e"/>
<path d="M1460 932V956" stroke="#444"/>
<circle cx="1334" cy="946" r="6.500" fill="none" stroke="#d4d4d4" stroke-width="1.400"/><path d="M1331 936H1337M1334 942V946H1337" stroke="#d4d4d4" fill="none" stroke-width="1.300"/>
<text x="1365" y="949" textLength="33" lengthAdjust="spacingAndGlyphs" style="fill:#d4d4d4">Start</text>
<text x="1432" y="949" style="fill:#d4d4d4">1</text>
<text x="1478" y="949" textLength="25" lengthAdjust="spacingAndGlyphs" style="fill:#d4d4d4">End</text>
<text x="1520" y="949" textLength="26" lengthAdjust="spacingAndGlyphs" style="fill:#d4d4d4">250</text>
<!-- scale -->
<rect x="34" y="962" width="29" height="22" rx="4" fill="#4772b3"/>
<text class="mid" x="47.500" y="978" style="fill:#e8eef8;font-size:14.500px">1</text>
<text class="sc mid" x="102" y="978">10</text><text class="sc mid" x="161" y="978">20</text><text class="sc mid" x="220" y="978">30</text><text class="sc mid" x="279" y="978">40</text><text class="sc mid" x="338" y="978">50</text><text class="sc mid" x="397" y="978">60</text><text class="sc mid" x="456" y="978">70</text><text class="sc mid" x="514" y="978">80</text><text class="sc mid" x="573" y="978">90</text><text class="sc mid" x="632" y="978">100</text><text class="sc mid" x="691" y="978">110</text><text class="sc mid" x="750" y="978">120</text><text class="sc mid" x="809" y="978">130</text><text class="sc mid" x="868" y="978">140</text><text class="sc mid" x="927" y="978">150</text><text class="sc mid" x="986" y="978">160</text><text class="sc mid" x="1044" y="978">170</text><text class="sc mid" x="1103" y="978">180</text><text class="sc mid" x="1162" y="978">190</text><text class="sc mid" x="1221" y="978">200</text><text class="sc mid" x="1280" y="978">210</text><text class="sc mid" x="1339" y="978">220</text><text class="sc mid" x="1398" y="978">230</text><text class="sc mid" x="1457" y="978">240</text><text class="sc mid" x="1515" y="978">250</text>
<rect x="1" y="985" width="1563" height="10" rx="5" fill="#585858"/>
<circle cx="6" cy="990" r="3.500" fill="#3a3a3a"/><circle cx="1557" cy="990" r="3.500" fill="#3a3a3a"/>
<rect x="46" y="994" width="2" height="4" fill="#a0a0a0"/>
<path d="M1572 975L1568 980L1572 985" fill="none" stroke="#888" stroke-width="1"/>
<rect x="0" y="998" width="1901" height="3" fill="#0c0c0c"/>
</svg>
</body></html>
